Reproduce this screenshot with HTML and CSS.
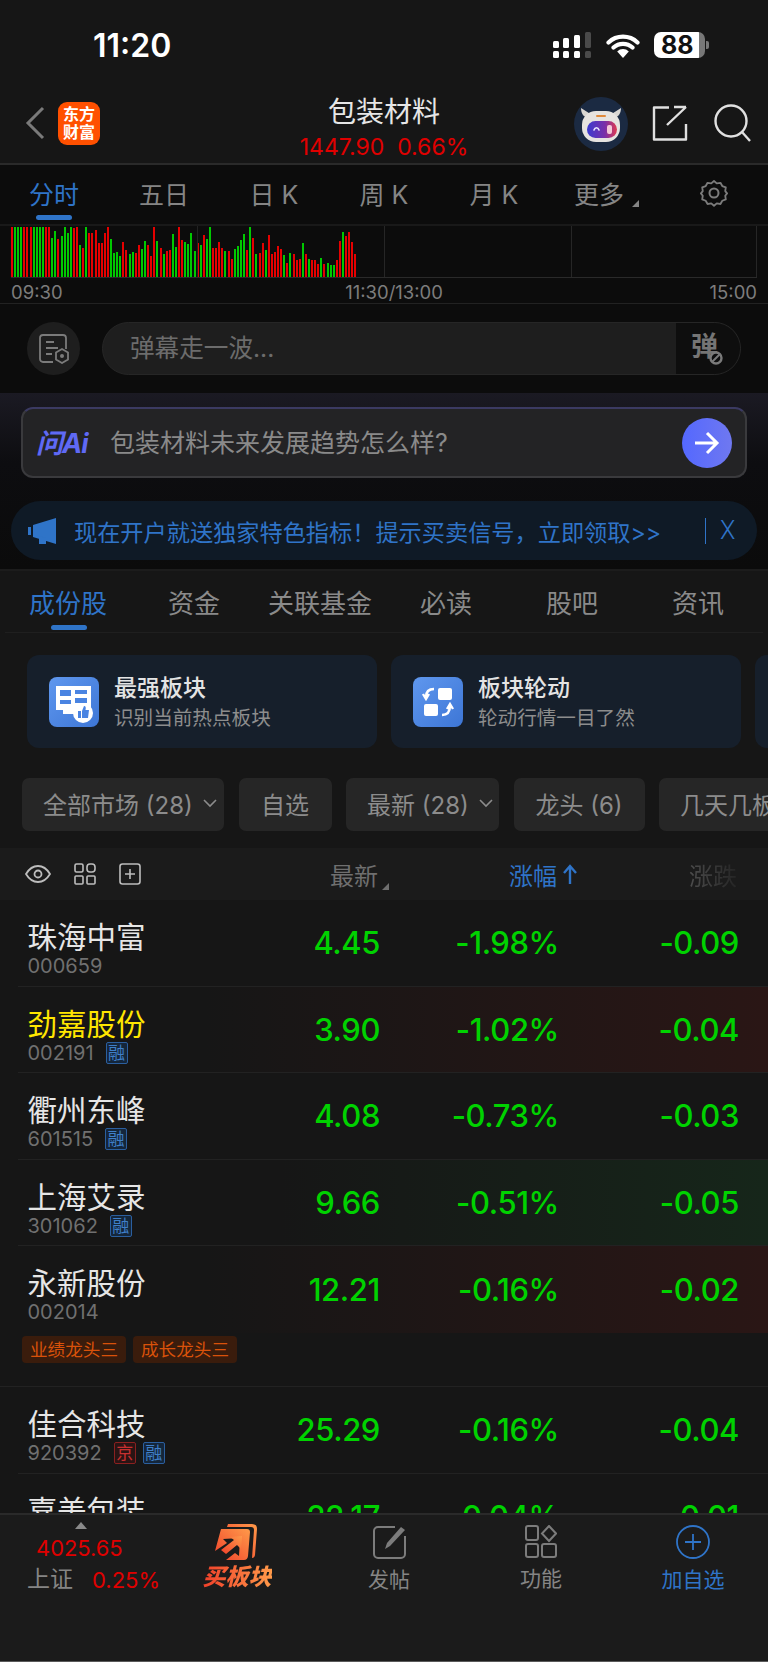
FILE: index.html
```html
<!DOCTYPE html>
<html lang="zh-CN">
<head>
<meta charset="utf-8">
<title>包装材料</title>
<link rel="stylesheet" href="styles.css">
</head>
<body>
<div class="app">
  <header class="status">
    <span class="clock">11:20</span>
    <div class="status-icons">
      <svg class="signal" viewBox="0 0 40 26" width="40" height="26">
        <g fill="#fff">
          <rect x="1" y="9" width="6" height="7" rx="1.5"/><rect x="11" y="6" width="6" height="10" rx="1.5"/><rect x="22" y="3" width="6" height="13" rx="1.5"/>
          <rect x="1" y="19" width="6" height="7" rx="1.5"/><rect x="11" y="19" width="6" height="7" rx="1.5"/><rect x="22" y="19" width="6" height="7" rx="1.5"/>
        </g>
        <g fill="#4a4a4a"><rect x="33" y="0" width="6" height="16" rx="1.5"/><rect x="33" y="19" width="6" height="7" rx="1.5"/></g>
      </svg>
      <svg class="wifi" viewBox="0 0 34 25" width="34" height="25">
        <path d="M2.5 9.5a21 21 0 0 1 29 0M7.5 14.5a14 14 0 0 1 19 0" fill="none" stroke="#fff" stroke-width="4.2" stroke-linecap="round"/>
        <path d="M17 25l-5.8-6.6a8.4 8.4 0 0 1 11.6 0z" fill="#fff"/>
      </svg>
      <div class="battery"><span class="battery-level">88</span><span class="battery-tip"></span></div>
    </div>
  </header>

  <nav class="navbar">
    <svg class="back" viewBox="0 0 20 34" width="20" height="34"><path d="M18 2L3 17l15 15" fill="none" stroke="#7a7a7a" stroke-width="3"/></svg>
    <div class="brand"><span>东方</span><span>财富</span></div>
    <div class="nav-title">
      <h1>包装材料</h1>
      <p>1447.90&nbsp; 0.66%</p>
    </div>
    <div class="nav-actions">
      <svg class="robot" viewBox="0 0 54 54" width="54" height="54">
        <circle cx="27" cy="27" r="27" fill="#1b2a42"/>
        <path d="M7 11c0 6 3 9 7 10l-2 6 6-9zM47 11c0 6-3 9-7 10l2 6-6-9z" fill="#d9d6d2"/>
        <rect x="8" y="14" width="38" height="31" rx="14" fill="#e6e3e0"/>
        <rect x="22" y="18" width="10" height="2" rx="1" fill="#e08a3c"/>
        <rect x="13" y="24" width="30" height="17" rx="8.5" fill="url(#visor)"/>
        <path d="M20 33c1-3 4-3 5 0" fill="none" stroke="#e6e6ff" stroke-width="1.6" stroke-linecap="round"/>
        <rect x="33" y="28" width="5" height="9" rx="2" fill="#f4c8d8"/>
        <defs><linearGradient id="visor"><stop offset="0" stop-color="#3b3bd0"/><stop offset=".6" stop-color="#7a2fa8"/><stop offset="1" stop-color="#e03a50"/></linearGradient></defs>
      </svg>
      <svg class="share" viewBox="0 0 36 36" width="36" height="36"><path d="M17 2.5H2v32h32V19M15 20L34 2M22 2h12v0" fill="none" stroke="#e0e0e0" stroke-width="2.4" stroke-linejoin="round"/></svg>
      <svg class="search" viewBox="0 0 37 38" width="37" height="38"><circle cx="17" cy="17" r="15.5" fill="none" stroke="#e0e0e0" stroke-width="2.4"/><path d="M28 28l8 9" stroke="#e0e0e0" stroke-width="2.4"/></svg>
    </div>
  </nav>

  <section class="quote">
    <div class="period-tabs">
      <a class="period active">分时</a>
      <a class="period">五日</a>
      <a class="period">日 K</a>
      <a class="period">周 K</a>
      <a class="period">月 K</a>
      <a class="period more">更多</a>
      <a class="period">
        <svg viewBox="0 0 30 28" width="30" height="28"><path d="M15 1.5l3 2.6 4-.6 2 3.5 3.8 1.5-.6 4 2 2.500-2 2.500.6 4-3.800 1.500-2 3.500-4-.6-3 2.600-3-2.600-4 .6-2-3.500-3.800-1.500.6-4-2-2.500 2-2.500-.6-4 3.800-1.500 2-3.500 4 .6z" transform="translate(1.200 .6) scale(.92)" fill="none" stroke="#7c7c7c" stroke-width="2" stroke-linejoin="round"/><circle cx="15" cy="14" r="4.500" fill="none" stroke="#7c7c7c" stroke-width="2"/></svg>
      </a>
    </div>
    <div class="chart">
      <div class="bars" id="bars"></div>
      <i class="grid-line g1"></i><i class="grid-line g2"></i><i class="grid-line g3"></i><i class="grid-line g4"></i>
    </div>
    <div class="axis"><span>09:30</span><span class="axis-mid">11:30/13:00</span><span>15:00</span></div>
    <div class="danmaku">
      <div class="danmaku-setting">
        <svg viewBox="0 0 32 30" width="32" height="30"><path d="M15 28H5a3 3 0 0 1-3-3V4a3 3 0 0 1 3-3h20a3 3 0 0 1 3 3v11M8 8h8M8 14h12M8 20h6" fill="none" stroke="#7b7b7b" stroke-width="1.800"/><path d="M24 15l6 3.500v7L24 29l-6-3.500v-7z" fill="none" stroke="#7b7b7b" stroke-width="1.800"/><circle cx="24" cy="22" r="2" fill="#7b7b7b"/></svg>
      </div>
      <div class="danmaku-input">
        <span class="danmaku-hint">弹幕走一波...</span>
        <span class="danmaku-send"><b>弹</b>
          <svg class="forbid" viewBox="0 0 14 14" width="14" height="14"><circle cx="7" cy="7" r="5.500" fill="#0e0e0e" stroke="#7a7a7a" stroke-width="2.400"/><path d="M3.500 10.500l7-7" stroke="#7a7a7a" stroke-width="2"/></svg>
        </span>
      </div>
    </div>
  </section>

  <section class="promo">
    <div class="ask">
      <span class="ask-logo">问Ai</span>
      <span class="ask-text">包装材料未来发展趋势怎么样?</span>
      <span class="ask-go"><svg viewBox="0 0 26 24" width="26" height="24"><path d="M1 12h22M13 2l10 10-10 10" fill="none" stroke="#fff" stroke-width="3"/></svg></span>
    </div>
    <div class="notice">
      <svg viewBox="0 0 28 26" width="28" height="26"><path d="M0 9h3v8H0zM5 7l23-7v26L5 19z" fill="#2f74c8"/><path d="M11 18v8h7v-6z" fill="#2f74c8"/></svg>
      <span class="notice-text">现在开户就送独家特色指标！提示买卖信号，立即领取&gt;&gt;</span>
      <span class="notice-close">X</span>
    </div>
  </section>

  <main class="board">
    <div class="board-tabs">
      <a class="board-tab active">成份股</a>
      <a class="board-tab">资金</a>
      <a class="board-tab">关联基金</a>
      <a class="board-tab">必读</a>
      <a class="board-tab">股吧</a>
      <a class="board-tab">资讯</a>
    </div>
    <div class="cards">
      <div class="card">
        <svg class="card-icon" viewBox="0 0 50 50" width="50" height="50">
          <rect width="50" height="50" rx="8" fill="url(#tile)"/>
          <defs><linearGradient id="tile" x1="0" y1="0" x2="1" y2="1"><stop offset="0" stop-color="#5f97ee"/><stop offset="1" stop-color="#3d76d6"/></linearGradient></defs>
          <path d="M7 9h35v24H7z" fill="#fff"/>
          <path d="M11 13h11v6H11zM11 23h11v4H11zM26 13h12v4H26zM26 21h12v5H26z" fill="#4a84e2"/>
          <path d="M14 33h14v4H14z" fill="#fff"/>
          <circle cx="34" cy="36" r="10" fill="#fff"/>
          <path d="M29 34h3v7h-3zM33 41v-7l2-5c2 0 2 2 1.500 4H40l-1 8z" fill="#4a84e2"/>
        </svg>
        <div class="card-text"><strong>最强板块</strong><small>识别当前热点板块</small></div>
      </div>
      <div class="card">
        <svg class="card-icon" viewBox="0 0 50 50" width="50" height="50">
          <rect width="50" height="50" rx="8" fill="url(#tile)"/>
          <rect x="25" y="11" width="14" height="12" rx="2" fill="#fff"/>
          <rect x="11" y="27" width="14" height="12" rx="2" fill="#fff"/>
          <path d="M21 12c-5 0-8 3-8 8M10 17l3 5 3-5M29 38c5 0 8-3 8-9M34 32l3-5 3 5" fill="none" stroke="#fff" stroke-width="2.400"/>
        </svg>
        <div class="card-text"><strong>板块轮动</strong><small>轮动行情一目了然</small></div>
      </div>
      <div class="card"></div>
    </div>
    <div class="filters">
      <span class="filter w-market">全部市场 (28)<svg viewBox="0 0 14 9" width="14" height="9"><path d="M1 1l6 6 6-6" fill="none" stroke="#8c8c8c" stroke-width="1.600"/></svg></span>
      <span class="filter w-own">自选</span>
      <span class="filter w-new">最新 (28)<svg viewBox="0 0 14 9" width="14" height="9"><path d="M1 1l6 6 6-6" fill="none" stroke="#8c8c8c" stroke-width="1.600"/></svg></span>
      <span class="filter w-lead">龙头 (6)</span>
      <span class="filter">几天几板</span>
    </div>
    <div class="list-head">
      <div class="head-icons">
        <svg viewBox="0 0 26 18" width="26" height="18"><path d="M1 9c3-5 7-8 12-8s9 3 12 8c-3 5-7 8-12 8S4 14 1 9z" fill="none" stroke="#bdbdbd" stroke-width="1.800"/><circle cx="13" cy="9" r="3.500" fill="none" stroke="#bdbdbd" stroke-width="1.800"/></svg>
        <svg viewBox="0 0 22 22" width="22" height="22"><g fill="none" stroke="#bdbdbd" stroke-width="1.600"><rect x="1" y="1" width="8" height="8" rx="1.500"/><rect x="13" y="1" width="8" height="8" rx="3"/><rect x="1" y="13" width="8" height="8" rx="1"/><rect x="13" y="13" width="8" height="8" rx="1"/></g></svg>
        <svg viewBox="0 0 22 22" width="22" height="22"><rect x="1" y="1" width="20" height="20" rx="2.500" fill="none" stroke="#bdbdbd" stroke-width="1.600"/><path d="M11 6v10M6 11h10" stroke="#bdbdbd" stroke-width="1.600"/></svg>
      </div>
      <span class="head-cell sorted-off">最新</span>
      <span class="head-cell sorted">涨幅<svg viewBox="0 0 14 20" width="14" height="20"><path d="M7 20V2M1 9l6-7 6 7" fill="none" stroke="#2f74c8" stroke-width="2.400"/></svg></span>
      <span class="head-cell sorted-off faded">涨跌</span>
    </div>
    <div class="rows">
      <div class="row">
        <div class="row-main">
          <div class="stock"><div class="stock-name">珠海中富</div><div class="stock-code">000659</div></div>
          <span class="num">4.45</span><span class="num">-1.98%</span><span class="num">-0.09</span>
        </div>
      </div>
      <div class="row">
        <div class="row-main tint-red">
          <div class="stock"><div class="stock-name watched">劲嘉股份</div><div class="stock-code">002191<em class="mark">融</em></div></div>
          <span class="num">3.90</span><span class="num">-1.02%</span><span class="num">-0.04</span>
        </div>
      </div>
      <div class="row">
        <div class="row-main">
          <div class="stock"><div class="stock-name">衢州东峰</div><div class="stock-code">601515<em class="mark">融</em></div></div>
          <span class="num">4.08</span><span class="num">-0.73%</span><span class="num">-0.03</span>
        </div>
      </div>
      <div class="row">
        <div class="row-main tint-green">
          <div class="stock"><div class="stock-name">上海艾录</div><div class="stock-code">301062<em class="mark">融</em></div></div>
          <span class="num">9.66</span><span class="num">-0.51%</span><span class="num">-0.05</span>
        </div>
      </div>
      <div class="row">
        <div class="row-main tint-red">
          <div class="stock"><div class="stock-name">永新股份</div><div class="stock-code">002014</div></div>
          <span class="num">12.21</span><span class="num">-0.16%</span><span class="num">-0.02</span>
        </div>
        <div class="tags"><span class="tag">业绩龙头三</span><span class="tag">成长龙头三</span></div>
      </div>
      <div class="row">
        <div class="row-main">
          <div class="stock"><div class="stock-name">佳合科技</div><div class="stock-code">920392<em class="mark mark-red">京</em><em class="mark second">融</em></div></div>
          <span class="num">25.29</span><span class="num">-0.16%</span><span class="num">-0.04</span>
        </div>
      </div>
      <div class="row">
        <div class="row-main">
          <div class="stock"><div class="stock-name">嘉美包装</div><div class="stock-code">002969</div></div>
          <span class="num">22.17</span><span class="num">-0.04%</span><span class="num">-0.01</span>
        </div>
      </div>
    </div>
  </main>

  <footer class="dock">
    <div class="dock-index">
      <i class="dock-caret"></i>
      <span class="index-value">4025.65</span>
      <span class="index-line"><span class="index-name">上证</span><span class="index-pct">0.25%</span></span>
    </div>
    <div class="dock-item hot">
      <svg viewBox="0 0 44 40" width="44" height="40">
        <defs><linearGradient id="flame" x1="0" y1="1" x2="1" y2="0"><stop offset="0" stop-color="#f0402a"/><stop offset="1" stop-color="#ff9a4a"/></linearGradient></defs>
        <path d="M13 2h24q5 0 5 5l-2 26q-.5 3-3 3l2-28q0-3-3-3H12z" fill="url(#flame)"/>
        <path d="M6 7h26q3 0 3 3l-2 24q-.5 4-4 4H11l9-7 4 3 1-18-17 1 4 4-12 8z" fill="url(#flame)"/>
        <path d="M6 28l13-10-4-3 12-1-1 13-4-4-11 9z" fill="url(#flame)"/>
      </svg>
      <span class="hot-label">买板块</span>
    </div>
    <div class="dock-item">
      <svg viewBox="0 0 34 34" width="34" height="34"><path d="M23 2H6a4 4 0 0 0-4 4v23a4 4 0 0 0 4 4h23a4 4 0 0 0 4-4V11" fill="none" stroke="#7c7c7c" stroke-width="2"/><path d="M13 24l2-6L29 2l4 3-15 16z" fill="#7c7c7c"/></svg>
      <span>发帖</span>
    </div>
    <div class="dock-item">
      <svg viewBox="0 0 32 33" width="32" height="33"><g fill="none" stroke="#7c7c7c" stroke-width="2"><rect x="1" y="1" width="12" height="14" rx="2"/><path d="M24 1l7 7.500-7 7.500-7-7.500z"/><rect x="1" y="19" width="12" height="13" rx="2"/><rect x="17" y="19" width="14" height="13" rx="2"/></g></svg>
      <span>功能</span>
    </div>
    <div class="dock-item add">
      <svg viewBox="0 0 34 34" width="34" height="34"><circle cx="17" cy="17" r="16" fill="none" stroke="#2f74c8" stroke-width="1.800"/><path d="M17 9v16M9 17h16" stroke="#2f74c8" stroke-width="1.800"/></svg>
      <span>加自选</span>
    </div>
  </footer>
</div>
<script src="script.js"></script>
</body>
</html>
```
FILE: styles.css
```css
* { box-sizing: border-box; }
html, body { margin: 0; padding: 0; background: #161616; }
body { font-family: Inter, "Noto Sans CJK SC", sans-serif; }
a { color: inherit; text-decoration: none; }
em, i { font-style: normal; }
svg { display: block; flex-shrink: 0; }

.app { width: 768px; height: 1662px; display: flex; flex-direction: column; overflow: hidden; background: #161616; }

/* status bar */
.status { height: 85px; flex-shrink: 0; padding: 25px 59px 0 93px; display: flex; justify-content: space-between; }
.clock { color: #fff; font-size: 32px; line-height: 41px; font-weight: 600; }
.status-icons { display: flex; align-items: flex-start; padding-top: 7px; }
.signal { margin-right: 14px; }
.wifi { margin-right: 14px; margin-top: 1px; }
.battery { width: 55px; height: 26px; display: flex; align-items: center; position: relative; }
.battery-level { width: 51px; height: 26px; border-radius: 7px; background: linear-gradient(90deg, #fff 88%, #777 88%); color: #111; font-size: 25px; line-height: 26px; font-weight: 700; padding-left: 7px; }
.battery-tip { width: 3px; height: 8px; margin-left: 1px; background: #777; border-radius: 0 2px 2px 0; }

/* navigation */
.navbar { height: 80px; flex-shrink: 0; display: flex; align-items: center; position: relative; border-bottom: 2px solid #2a2a2a; padding-left: 25px; }
.brand { width: 42px; height: 43px; margin-left: 13px; margin-top: -2px; border-radius: 9px; background: #ff5000; color: #fff; font-size: 16px; line-height: 18px; font-weight: 700; display: flex; flex-direction: column; align-items: center; justify-content: center; }
.back { margin-top: -2px; }
.nav-title { position: absolute; left: 0; right: 0; top: 8px; text-align: center; }
.nav-title h1 { margin: 0; color: #e6e6e6; font-size: 28px; line-height: 38px; font-weight: 400; }
.nav-title p { margin: 0; color: #e00000; font-size: 23px; line-height: 32px; }
.nav-actions { margin-left: auto; display: flex; align-items: center; padding-right: 17px; margin-top: -2px; }
.robot { margin-right: 24px; margin-top: 1px; }
.search { margin-left: 26px; }

/* quote panel */
.quote { background: #0c0c0c; flex-shrink: 0; }
.period-tabs { height: 61px; display: grid; grid-template-columns: repeat(7, 110px); margin-left: -1px; border-bottom: 2px solid #191919; }
.period { display: flex; align-items: center; justify-content: center; position: relative; color: #858585; font-size: 25px; padding-bottom: 4px; }
.period.active { color: #2f74c8; }
.period.active::after { content: ""; position: absolute; left: 37px; bottom: 4px; width: 36px; height: 5px; border-radius: 3px; background: #2f74c8; }
.period.more { padding-right: 10px; }
.period.more::after { content: ""; position: absolute; right: 20px; bottom: 17px; border-style: solid; border-width: 0 0 7px 7px; border-color: transparent transparent #858585 transparent; }
.chart { height: 52px; margin: 0 11px; position: relative; border-bottom: 1px solid #2a2a2a; }
.bars { height: 51px; display: flex; align-items: flex-end; gap: 1.100px; }
.bar { width: 2px; flex-shrink: 0; }
.bar.up { background: #e60000; }
.bar.down { background: #00c800; }
.grid-line { position: absolute; top: 0; bottom: 0; width: 1px; background: #262626; }
.g1 { left: 186px; background: #222; }
.g2 { left: 373px; }
.g3 { left: 560px; }
.g4 { left: 745px; }
.axis { height: 25px; margin: 0 11px; display: flex; justify-content: space-between; align-items: center; color: #7d7d7d; font-size: 18.500px; padding-top: 3px; }
.axis-mid { margin-left: 16px; }
.danmaku { height: 90px; border-top: 1px solid #222; display: flex; align-items: flex-start; padding: 18px 27px 0; gap: 22px; }
.danmaku-setting { width: 53px; height: 53px; border-radius: 50%; background: #1e1e1e; display: flex; align-items: center; justify-content: center; }
.danmaku-input { width: 639px; height: 53px; border-radius: 27px; border: 1px solid #262626; background: #1e1e1e; display: flex; align-items: center; justify-content: space-between; overflow: hidden; padding-left: 27px; }
.danmaku-hint { color: #6c6c6c; font-size: 24.600px; padding-bottom: 6px; }
.danmaku-send { width: 64px; height: 53px; background: #0e0e0e; position: relative; display: flex; align-items: center; padding-left: 15px; }
.danmaku-send b { color: #757575; font-size: 27px; font-weight: 700; line-height: 32px; padding-bottom: 3px; }
.forbid { position: absolute; left: 33px; top: 29px; }

/* promotions */
.promo { height: 178px; flex-shrink: 0; padding: 14px 11px 0; background: linear-gradient(180deg, #1b1a23 0, #0d0d10 70px, #0b0b0b 100%); border-bottom: 2px solid #1c1c1c; display: flex; flex-direction: column; align-items: center; }
.ask { width: 726px; height: 71px; border-radius: 12px; background: #232325; border: 2px solid #3a3a3d; border-top-color: #3b3a62; display: flex; align-items: center; padding: 0 13px 0 13px; flex-shrink: 0; }
.ask-logo { width: 74px; color: #5f69f5; font-size: 27px; font-weight: 700; font-style: italic; letter-spacing: -1px; padding-bottom: 2px; }
.ask-text { color: #8a8a8a; font-size: 25px; padding-bottom: 4px; }
.ask-go { margin-left: auto; width: 50px; height: 50px; border-radius: 50%; background: linear-gradient(90deg, #5468ff, #6f78f0); display: flex; align-items: center; justify-content: center; }
.notice { width: 746px; height: 59px; margin-top: 23px; border-radius: 30px; background: #0f1a26; display: flex; align-items: center; padding-left: 17px; position: relative; flex-shrink: 0; }
.notice-text { margin-left: 18px; color: #2f74c8; font-size: 23.200px; white-space: nowrap; }
.notice-close { position: absolute; left: 694px; top: 17px; height: 26px; line-height: 26px; border-left: 1px solid #2f74c8; padding-left: 14px; color: #2f74c8; font-family: Roboto, sans-serif; font-weight: 300; font-size: 25px; }

/* constituents board */
.board { flex: 1; min-height: 0; display: flex; flex-direction: column; overflow: hidden; background: #161616; }
.board-tabs { height: 62px; flex-shrink: 0; margin: 0 5px; display: grid; grid-template-columns: repeat(6, 126px); border-bottom: 1px solid #1f1f1f; }
.board-tab { display: flex; align-items: center; justify-content: center; color: #8a8a8a; font-size: 26px; position: relative; }
.board-tab.active { color: #2f74c8; }
.board-tab.active::after { content: ""; position: absolute; left: 46px; bottom: 2px; width: 36px; height: 5px; border-radius: 3px; background: #2f74c8; }
.cards { flex-shrink: 0; display: flex; gap: 14px; padding: 22px 0 0 27px; height: 116px; overflow: hidden; }
.card { width: 350px; height: 93px; flex-shrink: 0; border-radius: 12px; background: #161f2b; display: flex; align-items: center; padding-left: 22px; }
.card-text { margin-left: 15px; display: flex; flex-direction: column; }
.card-text strong { color: #e4e4e4; font-size: 23px; line-height: 32px; font-weight: 500; }
.card-text small { color: #8d8d8d; font-size: 19.600px; line-height: 28px; }
.filters { flex-shrink: 0; height: 99px; padding: 29px 0 17px 22px; display: flex; gap: 14.500px; overflow: hidden; }
.filter { height: 53px; flex-shrink: 0; border-radius: 7px; background: #262626; color: #8c8c8c; font-size: 24px; padding: 0 21px 2px; display: flex; align-items: center; gap: 10px; white-space: nowrap; }
.w-market { width: 202px; padding-right: 0; }
.w-own { width: 93px; justify-content: center; }
.w-new { width: 153px; padding-right: 0; }
.w-lead { width: 131px; justify-content: center; padding: 0 0 2px; }
.list-head { height: 52px; flex-shrink: 0; background: #1b1b1b; display: grid; grid-template-columns: 280px 98px 199px 160px; align-items: center; }
.head-icons { display: flex; align-items: center; padding-left: 25px; gap: 23px; }
.head-cell { color: #6f6f6f; font-size: 24px; display: flex; align-items: center; justify-content: flex-end; gap: 6px; position: relative; }
.head-cell.sorted { color: #2f74c8; }
.sorted-off::after { content: ""; position: absolute; right: -11px; bottom: 2px; border-style: solid; border-width: 0 0 7px 7px; border-color: transparent transparent #6f6f6f transparent; }
.faded { -webkit-mask-image: linear-gradient(90deg, #000 45%, rgba(0,0,0,.12) 100%); mask-image: linear-gradient(90deg, #000 45%, rgba(0,0,0,.12) 100%); }
.rows { flex: 1; min-height: 0; overflow: hidden; }
.row { padding-left: 18px; }
.row > * { border-bottom: 1px solid #222; }
.row-main { height: 86.600px; display: grid; grid-template-columns: 262px 100px 179px 180px 29px; align-items: center; }
.row:has(.tags) .row-main { border-bottom: 0; }
.tint-red { background: linear-gradient(90deg, rgba(42,22,21,0) 25%, #2a1615 100%); }
.tint-green { background: linear-gradient(90deg, rgba(22,38,26,0) 35%, #16261a 100%); }
.stock { padding-left: 9.500px; align-self: start; padding-top: 18px; }
.stock-name { color: #e6e6e6; font-size: 29.500px; line-height: 38px; white-space: nowrap; }
.stock-name.watched { color: #ffe600; }
.stock-code { color: #707070; font-size: 20px; line-height: 22px; margin-top: -1px; display: flex; align-items: center; }
.mark { width: 22px; height: 22px; margin-left: 12px; border: 1px solid #2b5f9f; border-radius: 2px; background: #14263b; color: #3f7fc8; font-size: 17px; line-height: 20px; text-align: center; }
.mark-red { border-color: #8a2020; background: #2a1414; color: #c83030; }
.mark.second { margin-left: 7px; }
.num { color: #00d200; font-size: 31px; font-weight: 500; letter-spacing: -.4px; text-align: right; }
.tags { height: 54px; margin-left: -18px; padding: 3px 0 0 22px; display: flex; align-items: flex-start; gap: 7px; }
.tag { width: 104px; height: 27px; border-radius: 4px; background: #3a1c0c; color: #d9520a; font-size: 17.600px; line-height: 27px; text-align: center; }

/* bottom dock */
.dock { height: 149px; flex-shrink: 0; background: #1b1b1b; border-top: 2px solid #2a2a2a; border-bottom: 1px solid #5a5a5a; display: grid; grid-template-columns: 161px repeat(4, 152px); }
.dock-index { position: relative; padding-left: 27px; display: flex; flex-direction: column; }
.dock-caret { position: absolute; left: 75px; top: 7px; border-style: solid; border-width: 0 6px 7px 6px; border-color: transparent transparent #8a8a8a transparent; }
.index-value { margin: 18px 0 0 9px; color: #e00000; font-size: 21.900px; line-height: 30px; }
.index-line { display: flex; align-items: center; }
.index-name { color: #858585; font-size: 23px; line-height: 32px; padding-bottom: 2px; }
.index-pct { margin-left: 19px; color: #e00000; font-size: 22px; }
.dock-item { display: flex; flex-direction: column; align-items: center; padding-top: 10px; color: #858585; font-size: 21px; }
.dock-item span { margin-top: 6px; line-height: 30px; }
.dock-item.add { color: #2f74c8; }
.dock-item.hot { padding-top: 7px; }
.hot-label { background: linear-gradient(90deg, #f0402a, #ff9a4a); -webkit-background-clip: text; background-clip: text; color: transparent; font-size: 23px; font-weight: 900; font-style: italic; margin-top: 0 !important; }
```
FILE: script.js
```javascript
// Minute volume bars: r = up, g = down, value = offset from the top of the plot (in 1/3 px).
var volume = "r12 g12 g12 g12 r12 r12 r12 g12 g12 g12 g12 r12 r12 g45 g24 r50 g41 g12 g30 g12 r16 r12 g67 r76 g12 r30 r30 r21 r60 r60 r30 r12 g48 g90 g88 g100 r58 r82 g95 g87 r90 r67 g79 g54 r67 r100 r12 g56 r76 g93 r86 r81 g34 g72 r12 r52 g57 g63 g30 g84 r60 g66 r36 g48 g12 r76 r75 r57 r76 g85 r85 r109 g80 g70 g52 g35 r82 g12 r47 g95 r90 r61 g81 r38 r93 r89 r69 r78 g97 r122 g90 r94 r112 r110 g60 r95 g110 r113 r113 r123 g107 r124 g121 g128 g127 r113 r55 g28 r40 r27 r59 r93";
var host = document.getElementById("bars");
volume.split(" ").forEach(function (item) {
  var bar = document.createElement("span");
  bar.className = "bar " + (item[0] === "r" ? "up" : "down");
  bar.style.height = ((163 - Number(item.slice(1))) / 3).toFixed(1) + "px";
  host.appendChild(bar);
});
```
